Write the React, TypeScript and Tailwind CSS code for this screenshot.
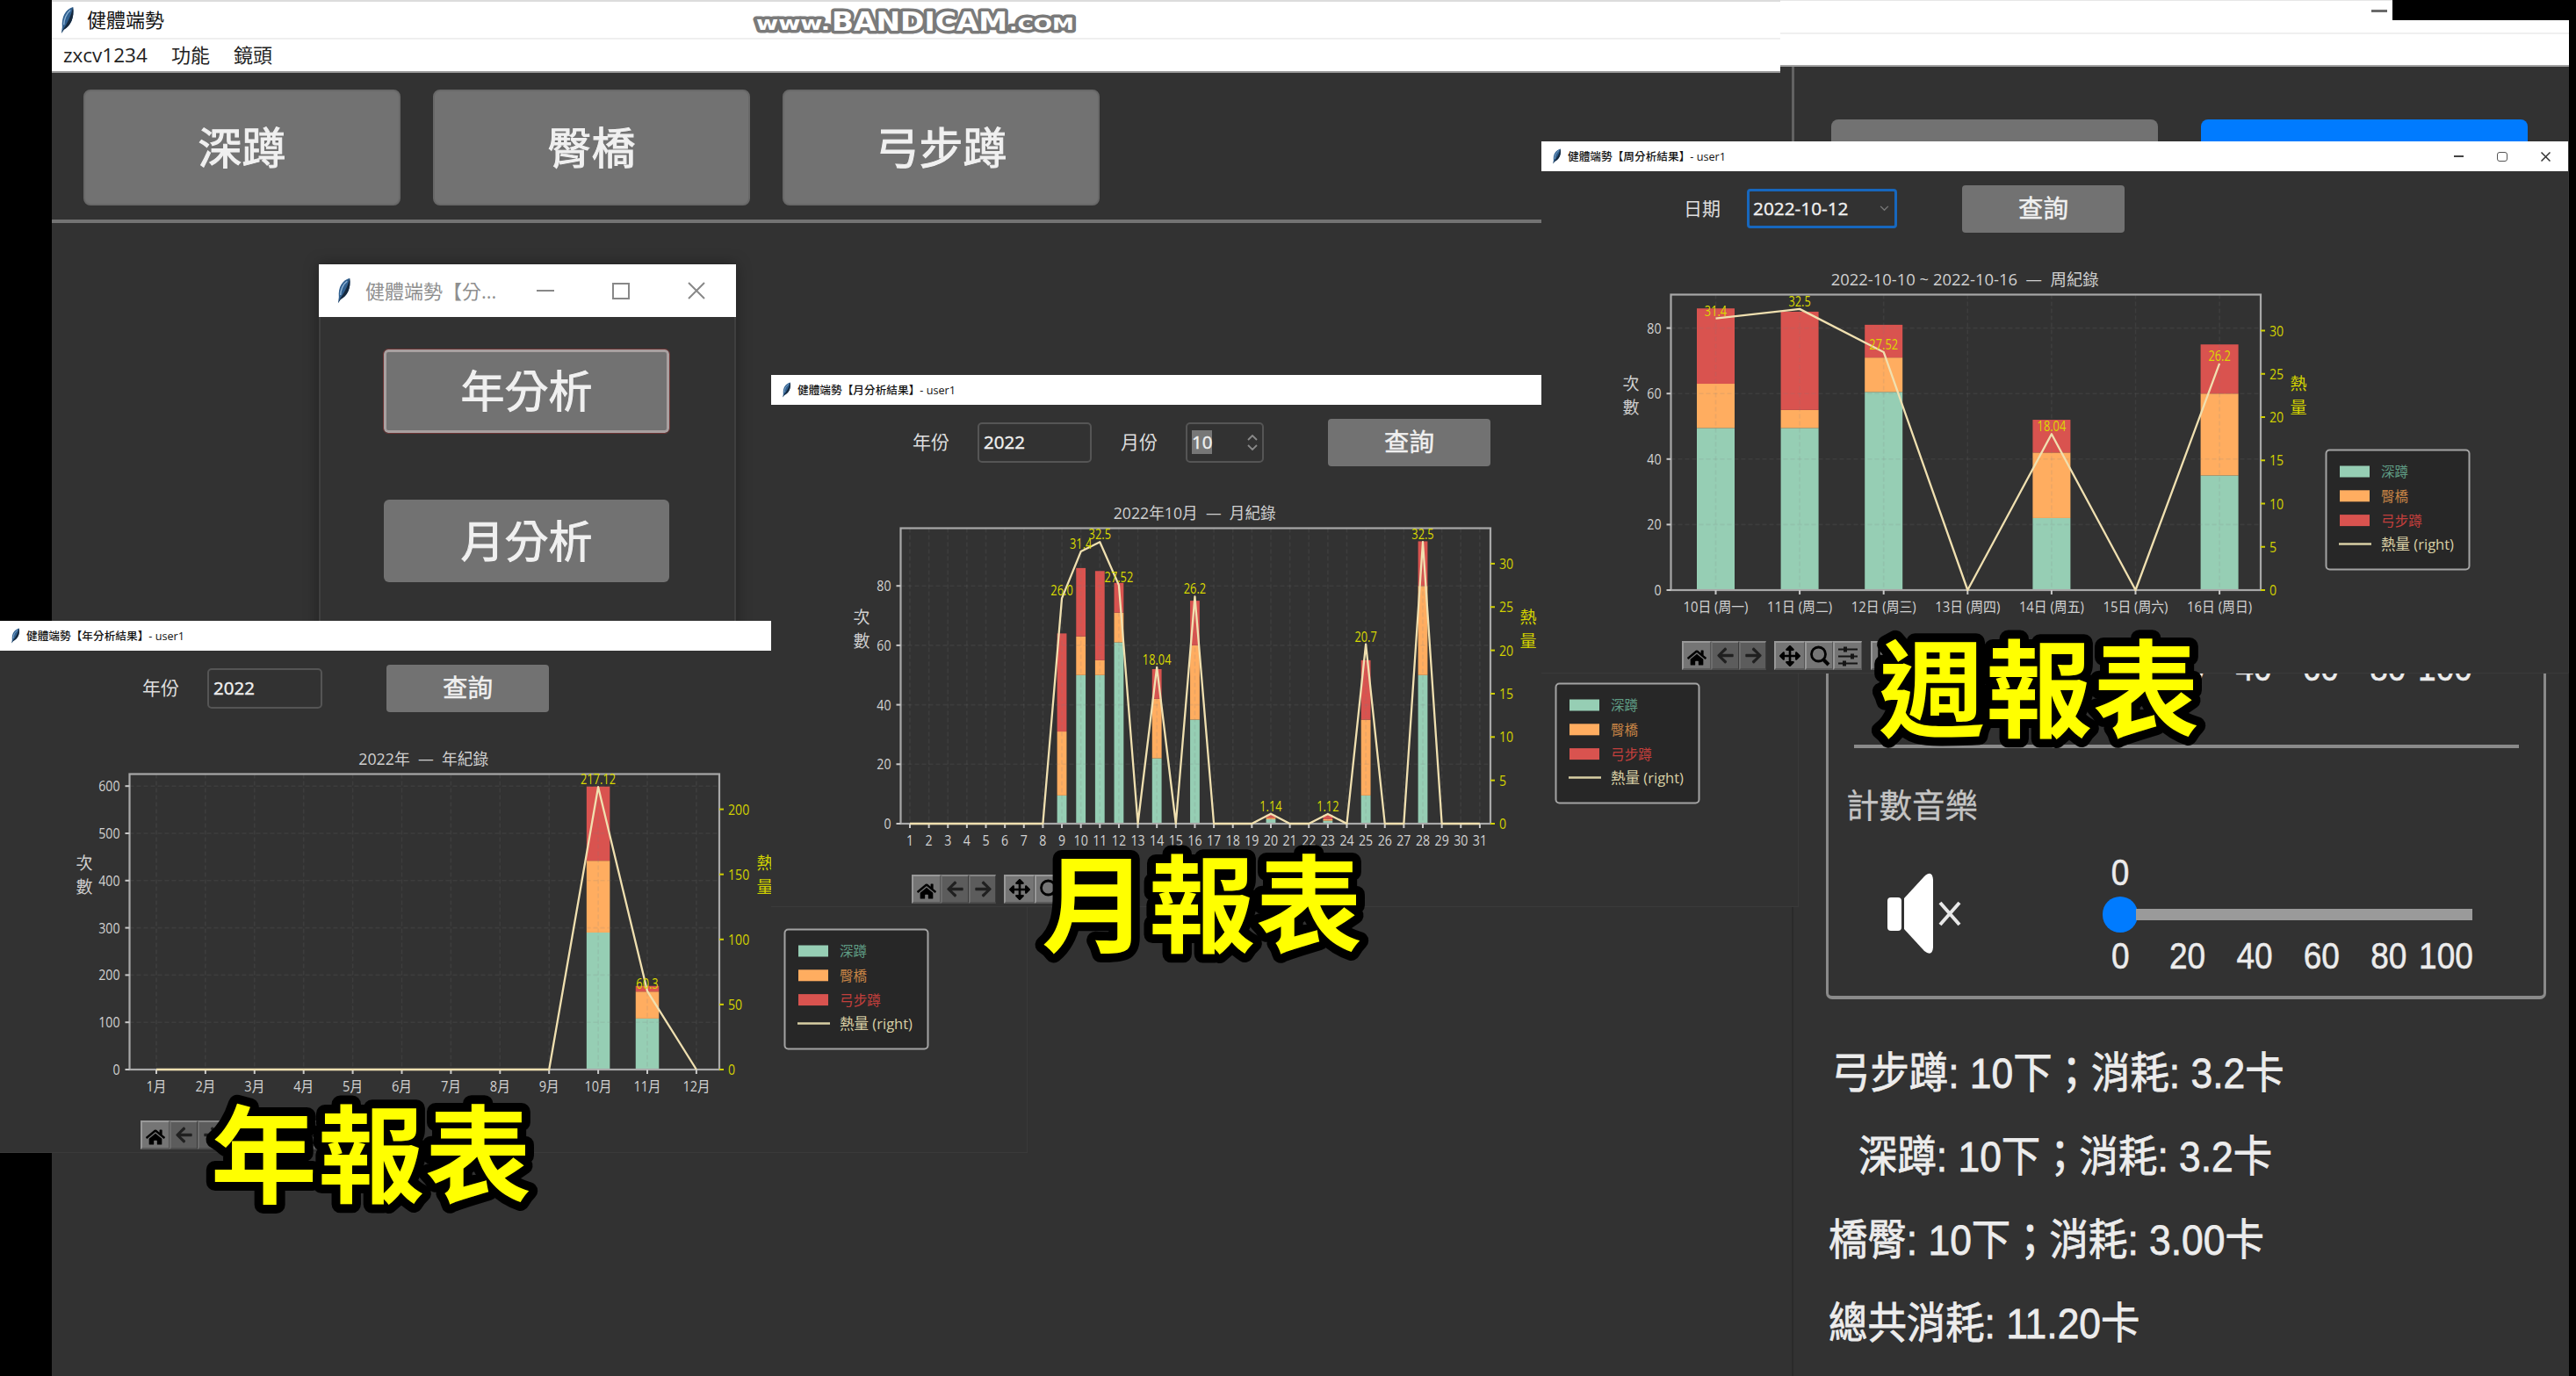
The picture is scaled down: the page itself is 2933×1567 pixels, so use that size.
import React from "react";
import { FaHome, FaArrowLeft, FaArrowRight, FaArrowsAlt, FaSave } from "react-icons/fa";

const UI = "'Open Sans','Noto Sans CJK TC',sans-serif";

type Series = { i: number; g: number; o: number; r: number };
type ChartProps = {
  title: string;
  titleWidth: number;
  x0: number;
  step: number;
  labels: string[];
  labelWidth: (s: string) => number;
  leftLabelX: number;
  rightLabelX: number;
  barW: number;
  yTicks: number[];
  yScale: number;
  rTicks: number[];
  rScale: number;
  bars: Series[];
  values: number[];
  notes: { i: number; t: string }[];
};

const L = 147.5;
const R = 819;
const T = 174.5;
const B = 511;

function Feather({ className }: { className: string }) {
  return (
    <svg viewBox="0 0 18 36" preserveAspectRatio="none" className={className}>
      <path d="M16 1 C7 4 2 13 3 27 L2 35 L5 30 C13 26 18 14 16 1Z" fill="#2f5f8f" />
      <path d="M16 1 C14 12 9 22 4 30 L2 35 L5 30 C13 26 18 14 16 1Z" fill="#16283c" />
      <path d="M13 5 C8 9 5 17 5 24" stroke="#8fb4d6" strokeWidth="1.5" fill="none" />
    </svg>
  );
}

function Legend() {
  const rows = [
    { c: "#96ceb4", t: "深蹲", w: 31, text: "#5f9c84" },
    { c: "#ffad60", t: "臀橋", w: 31, text: "#c98546" },
    { c: "#d9534f", t: "弓步蹲", w: 47, text: "#c23f3c" },
  ];
  return (
    <g>
      <rect x={893.5} y={351.5} width={163} height={136} rx={4} fill="#272727" stroke="#a3a3a3" strokeWidth={2} />
      {rows.map((r, i) => (
        <g key={r.t}>
          <rect x={909} y={369.5 + i * 27.8} width={34} height={13} fill={r.c} />
          <text x={956} y={382 + i * 27.8} fontSize={16} fill={r.text} textLength={r.w} lengthAdjust="spacingAndGlyphs">{r.t}</text>
        </g>
      ))}
      <line x1={908} x2={945} y1={458.5} y2={458.5} stroke="#d8cfa4" strokeWidth={2.5} />
      <text x={956} y={465} fontSize={17} fill="#d8cfa4" textLength={83} lengthAdjust="spacingAndGlyphs">熱量 (right)</text>
    </g>
  );
}

function digitsWidth(v: number) {
  return String(v).length * 8.1;
}

function noteWidth(t: string) {
  return (t.length - 1) * 7.3 + 3.5;
}

function Chart(p: ChartProps) {
  const x = (i: number) => p.x0 + i * p.step;
  const y = (v: number) => B - v * p.yScale;
  const ry = (v: number) => B - v * p.rScale;
  return (
    <svg viewBox="0 119 1170 446" className="block h-[446px] w-[1170px] shrink-0" fontFamily={UI}>
      <text x={(L + R) / 2 - 1} y={163.5} fontSize={18} fill="#d0d0d0" textAnchor="middle" textLength={p.titleWidth} lengthAdjust="spacingAndGlyphs">{p.title}</text>
      {p.bars.map((b) => (
        <g key={b.i}>
          <rect x={x(b.i) - p.barW / 2} width={p.barW} y={y(b.g)} height={b.g * p.yScale} fill="#96ceb4" />
          <rect x={x(b.i) - p.barW / 2} width={p.barW} y={y(b.g + b.o)} height={b.o * p.yScale} fill="#ffad60" />
          <rect x={x(b.i) - p.barW / 2} width={p.barW} y={y(b.g + b.o + b.r)} height={b.r * p.yScale} fill="#d9534f" />
        </g>
      ))}
      <g stroke="#808080" strokeOpacity={0.15} strokeWidth={1.6} strokeDasharray="5 3">
        {p.labels.map((l, i) => <line key={l} x1={x(i)} x2={x(i)} y1={T} y2={B} />)}
        {p.yTicks.map((v) => <line key={v} x1={L} x2={R} y1={y(v)} y2={y(v)} />)}
      </g>
      <rect x={L} y={T} width={R - L} height={B - T} fill="none" stroke="#a8a8a8" strokeWidth={2.2} />
      {p.labels.map((l, i) => (
        <g key={l}>
          <line x1={x(i)} x2={x(i)} y1={B} y2={B + 5} stroke="#c8c8c8" strokeWidth={2} />
          <text x={x(i)} y={535.5} fontSize={16} fill="#d2d2d2" textAnchor="middle" textLength={p.labelWidth(l)} lengthAdjust="spacingAndGlyphs">{l}</text>
        </g>
      ))}
      {p.yTicks.map((v) => (
        <g key={v}>
          <line x1={L - 5} x2={L} y1={y(v)} y2={y(v)} stroke="#c8c8c8" strokeWidth={2} />
          <text x={L - 11} y={y(v) + 6} fontSize={16} fill="#d2d2d2" textAnchor="end" textLength={digitsWidth(v)} lengthAdjust="spacingAndGlyphs">{v}</text>
        </g>
      ))}
      {p.rTicks.map((v) => (
        <g key={v}>
          <line x1={R} x2={R + 5} y1={ry(v)} y2={ry(v)} stroke="#cfcf00" strokeWidth={2} />
          <text x={R + 10} y={ry(v) + 6} fontSize={16} fill="#d2d200" textLength={digitsWidth(v)} lengthAdjust="spacingAndGlyphs">{v}</text>
        </g>
      ))}
      <g fontSize={19} textAnchor="middle">
        <text x={p.leftLabelX} y={283} fill="#d0d0d0">次</text>
        <text x={p.leftLabelX} y={310} fill="#d0d0d0">數</text>
        <text x={p.rightLabelX} y={283} fill="#d2d200">熱</text>
        <text x={p.rightLabelX} y={310} fill="#d2d200">量</text>
      </g>
      <polyline points={p.values.map((v, i) => `${x(i)},${ry(v)}`).join(" ")} fill="none" stroke="#f0e0b0" strokeWidth={2.3} strokeLinejoin="round" />
      {p.notes.map((n) => (
        <text key={n.i} x={x(n.i)} y={ry(p.values[n.i]) - 3} fontSize={15.5} fill="#dada00" textAnchor="middle" textLength={noteWidth(n.t)} lengthAdjust="spacingAndGlyphs">{n.t}</text>
      ))}
      <Legend />
    </svg>
  );
}

function ToolButton({ dim, className, children }: { dim?: boolean; className: string; children?: React.ReactNode }) {
  return (
    <div
      className={`flex h-[33px] items-center justify-center border-t-2 border-l-2 border-r border-b-2 ${
        dim ? "border-t-[#858585] border-l-[#6c6c6c] border-r-[#3c3c3c] border-b-[#4c4c4c] bg-[#5c5c5c] text-[#202020]" : "border-t-[#989898] border-l-[#989898] border-r-[#555555] border-b-[#5a5a5a] bg-[#757575] text-black"
      } ${className}`}
    >
      {children}
    </div>
  );
}

function Toolbar() {
  return (
    <div className="mt-[4px] ml-[160px] flex shrink-0">
      <ToolButton className="w-[33px]"><FaHome size={22} className="mt-1" /></ToolButton>
      <ToolButton dim className="w-[32px]"><FaArrowLeft size={21} /></ToolButton>
      <ToolButton dim className="w-[31px]"><FaArrowRight size={21} /></ToolButton>
      <ToolButton className="ml-[9px] w-[35px]"><FaArrowsAlt size={24} /></ToolButton>
      <ToolButton className="w-[32px]">
        <svg viewBox="0 0 24 24" width={24} height={24} fill="none" stroke="black">
          <circle cx="10.5" cy="10" r="8" strokeWidth="2.8" />
          <path d="M16 16 L22 22" strokeWidth="4" />
        </svg>
      </ToolButton>
      <ToolButton className="w-[33px]">
        <svg viewBox="0 0 24 24" width={24} height={24} fill="none" stroke="#151515" strokeWidth="2.2">
          <path d="M1 4.5H23M1 12.5H23M1 20.5H23" />
          <path d="M9 1.5V7.5M17 9.5V15.5M8 17.5V23.5" strokeWidth="4" />
        </svg>
      </ToolButton>
      <ToolButton className="ml-[10px] w-[32px]"><FaSave size={20} /></ToolButton>
    </div>
  );
}

function QueryButton({ className }: { className: string }) {
  return <div className={`flex h-[54px] w-[185px] items-center justify-center rounded-[4px] bg-[#727272] text-[28.5px] text-[#f0f0f0] [-webkit-text-stroke:0.5px] ${className}`}>查詢</div>;
}

function FieldLabel({ className, children }: { className: string; children: React.ReactNode }) {
  return <div className={`shrink-0 text-[21px] text-[#dedede] ${className}`}>{children}</div>;
}

function ReportWindow({ name, className, controls, form, chart }: { name: string; className: string; controls?: boolean; form: React.ReactNode; chart: React.ReactNode }) {
  return (
    <div className={`absolute flex h-[606px] w-[1170px] flex-col overflow-hidden border-r border-b border-[#3a3a3a] bg-[#323232] ${className}`}>
      <div className="flex h-[34px] shrink-0 items-center bg-white pl-[12px]">
        <Feather className="h-[18px] w-[11px]" />
        <svg viewBox="0 0 181 24" className="ml-[7px] h-[24px] w-[181px]" fontFamily={UI} fontSize="12.5" fontWeight="500">
          <text x="0" y="16.5" fill="#111" textLength="180" lengthAdjust="spacingAndGlyphs">{name}</text>
        </svg>
        {controls && (
          <div className="mr-[20px] ml-auto flex items-center gap-[38px]">
            <div className="h-[2px] w-[11px] bg-[#444]" />
            <div className="h-[11px] w-[12px] rounded-[3px] border-[1.5px] border-[#555]" />
            <svg viewBox="0 0 11 11" width={11} height={11} stroke="#333" strokeWidth="1.5"><path d="M0.5 0.5L10.5 10.5M10.5 0.5L0.5 10.5" /></svg>
          </div>
        )}
      </div>
      <div className="flex h-[85px] shrink-0 items-center">{form}</div>
      {chart}
      <Toolbar />
    </div>
  );
}

function Caption({ text, className }: { text: string; className: string }) {
  return (
    <svg viewBox="0 0 400 160" className={`absolute h-[160px] w-[400px] ${className}`} fontFamily="'Noto Sans CJK TC',sans-serif" fontWeight="700">
      <text x="18" y="124" fontSize="121" fill="#ffff00" stroke="black" strokeWidth="20" strokeLinejoin="round" paintOrder="stroke" textLength="365">{text}</text>
    </svg>
  );
}

function TopButton({ children }: { children: React.ReactNode }) {
  return <div className="flex h-[132px] w-[361px] items-center justify-center rounded-[8px] border-2 border-[#686868] bg-[#727272] text-[50px] text-[#f0f0f0] [-webkit-text-stroke:1px]">{children}</div>;
}

function MainWindow() {
  return (
    <div className="absolute top-0 left-[59px] flex h-[1567px] w-[1981px] flex-col">
      <div className="flex h-[45px] w-[1968px] items-center border-t-2 border-b-2 border-t-[#dcdcdc] border-b-[#efefef] bg-white pl-[9px] text-[22px] text-[#111]">
        <Feather className="h-[32px] w-[17px]" />
        <span className="ml-[14px]">健體端勢</span>
      </div>
      <div className="flex h-[38px] w-[1968px] items-center gap-[27px] border-b-2 border-[#9a9a9a] bg-white pb-[1px] pl-[13px] text-[22px] text-[#222]">
        <span className="w-[96px] text-[22.5px]">zxcv1234</span>
        <span>功能</span>
        <span>鏡頭</span>
      </div>
      <div className="flex gap-[37px] border-b-4 border-[#737373] px-[36px] pt-[19px] pb-[16px]">
        <TopButton>深蹲</TopButton>
        <TopButton>臀橋</TopButton>
        <TopButton>弓步蹲</TopButton>
      </div>
    </div>
  );
}

function Dialog() {
  return (
    <div className="absolute top-[301px] left-[363px] flex h-[500px] w-[475px] flex-col border-x-2 border-[#3f3f3f] bg-[#323232] shadow-[0_0_16px_rgba(0,0,0,0.35)]">
      <div className="-mx-[2px] flex h-[60px] items-center bg-white pr-[35px] pl-[20px] text-[22px] text-[#8f8f8f]">
        <Feather className="h-[30px] w-[17px]" />
        <span className="ml-[16px] whitespace-nowrap">健體端勢【分...</span>
        <div className="ml-auto flex items-center gap-[66px]">
          <div className="h-[2px] w-[20px] bg-[#888]" />
          <div className="h-[19px] w-[20px] border-2 border-[#888]" />
          <svg viewBox="0 0 20 20" width={20} height={20} stroke="#888" strokeWidth="2"><path d="M1 1L19 19M19 1L1 19" /></svg>
        </div>
      </div>
      <div className="mt-[37px] ml-[72px] flex h-[95px] w-[325px] items-center justify-center rounded-[5px] border-[3px] border-[#a8a0a0] bg-[#727272] text-[50px] text-[#f0f0f0] outline-1 outline-[#6d3434] [-webkit-text-stroke:1px]">年分析</div>
      <div className="mt-[76px] ml-[72px] flex h-[94px] w-[325px] items-center justify-center rounded-[6px] bg-[#727272] text-[50px] text-[#f0f0f0] [-webkit-text-stroke:1px]">月分析</div>
    </div>
  );
}

function Scale() {
  const marks = ["0", "20", "40", "60", "80"];
  return (
    <div className="flex font-['Liberation_Sans'] text-[37px] leading-[42px] text-[#ececec]">
      {marks.map((m) => (
        <span key={m} className="w-[76.4px] scale-y-[1.14] text-center [-webkit-text-stroke:0.5px]">{m}</span>
      ))}
      <span className="-ml-[5px] w-[64px] scale-y-[1.14] text-center [-webkit-text-stroke:0.5px]">100</span>
    </div>
  );
}

function Stat({ className, children }: { className: string; children: React.ReactNode }) {
  return <div className={`flex h-[95px] origin-left scale-y-[1.1] items-center whitespace-nowrap text-[44.4px] text-[#ececec] [-webkit-text-stroke:0.7px] ${className}`}>{children}</div>;
}

function SidePanel() {
  return (
    <div className="absolute top-0 left-[2040px] h-[1567px] w-[885px] bg-[#323232]">
      <div className="-ml-[13px] flex h-[76px] flex-col border-t border-b-2 border-t-[#e6e6e6] border-b-[#a0a0a0] bg-white">
        <div className="flex h-[38px] items-start border-b-2 border-[#f0f0f0] pt-[10px] pl-[673px]">
          <div className="h-[3px] w-[18px] bg-[#6a6a6a]" />
        </div>
      </div>
      <div className="flex h-[690px] gap-[49px] border-l-[3px] border-[#626262] pt-[60px] pl-[42px]">
        <div className="h-[100px] w-[372px] rounded-[8px] bg-[#727272]" />
        <div className="h-[100px] w-[372px] rounded-[8px] bg-[#007bff]" />
      </div>
      <div className="flex h-[801px] flex-col border-l-2 border-[#2a2a2a]">
        <div className="ml-[37px] flex h-[372px] w-[820px] shrink-0 flex-col rounded-b-[7px] border-x-[3px] border-b-4 border-[#8a8a8a]">
          <div className="mr-[28px] ml-[29px] flex h-[86px] flex-col border-b-4 border-[#8a8a8a]">
            <div className="-mt-[26px] ml-[264px]"><Scale /></div>
          </div>
          <div className="mt-[38px] ml-[20px] text-[37.5px] leading-[54px] text-[#c4c4c4] [-webkit-text-stroke:0.3px]">計數音樂</div>
          <div className="mt-[28px] flex">
            <svg viewBox="0 0 90 96" width={90} height={96} className="mt-[20px] ml-[65px] shrink-0">
              <rect x="2" y="30" width="16" height="38" rx="4" fill="white" />
              <path d="M21 31 L44 6 Q53 -2 54 10 V87 Q53 98 44 91 L21 66Z" fill="white" />
              <path d="M62 36 L84 61 M84 36 L62 61" stroke="#e8e8e8" strokeWidth="4" />
            </svg>
            <div className="ml-[139px] flex flex-col">
              <div className="mt-[1px] w-[76px] scale-y-[1.14] text-center font-['Liberation_Sans'] text-[37px] leading-[42px] text-[#ececec] [-webkit-text-stroke:0.5px]">0</div>
              <div className="mt-[6px] ml-[18px] flex h-[41px] items-center">
                <div className="h-[41px] w-[40px] rounded-full bg-[#007bff]" />
                <div className="-ml-[2px] h-[13px] w-[383px] bg-[#9a9a9a]" />
              </div>
              <div className="mt-[6px]"><Scale /></div>
            </div>
          </div>
        </div>
        <div className="mt-[38px] flex flex-col font-['Liberation_Sans','Noto_Sans_CJK_TC',sans-serif]">
          <Stat className="ml-[43px]">弓步蹲: 10下；消耗: 3.2卡</Stat>
          <Stat className="ml-[74px]">深蹲: 10下；消耗: 3.2卡</Stat>
          <Stat className="ml-[40px]">橋臀: 10下；消耗: 3.00卡</Stat>
          <Stat className="ml-[40px]">總共消耗: 11.20卡</Stat>
        </div>
      </div>
    </div>
  );
}

const monthValues = Array.from({ length: 31 }, () => 0);
Object.entries({ 9: 26, 10: 31.4, 11: 32.5, 12: 27.52, 14: 18.04, 16: 26.2, 20: 1.14, 23: 1.12, 25: 20.7, 28: 32.5 }).forEach(([d, v]) => {
  monthValues[Number(d) - 1] = v;
});

export default function App() {
  return (
    <div className="relative h-[1567px] w-[2933px] overflow-hidden bg-black font-['Open_Sans','Noto_Sans_CJK_TC',sans-serif]">
      <div className="absolute top-0 left-[59px] h-[1567px] w-[2866px] bg-[#323232]" />
      <SidePanel />
      <MainWindow />
      <svg viewBox="0 0 380 40" className="absolute top-[4px] left-[854px] h-[40px] w-[380px]" fontFamily="'DejaVu Sans',sans-serif" fontWeight="700" fill="white" stroke="#7a7a7a" strokeWidth="7" strokeLinejoin="round" paintOrder="stroke">
        <text x="7" y="30" fontSize="21" textLength="84" lengthAdjust="spacingAndGlyphs">www.</text>
        <text x="295" y="30" fontSize="20" textLength="74" lengthAdjust="spacingAndGlyphs">.COM</text>
        <text x="93" y="30.5" fontSize="30" textLength="200" lengthAdjust="spacingAndGlyphs">BANDICAM</text>
      </svg>
      <div className="absolute top-0 left-[2724px] h-[23px] w-[209px] bg-black" />
      <Dialog />
      <ReportWindow
        name="健體端勢【年分析結果】- user1"
        className="top-[707px] left-0"
        form={
          <>
            <FieldLabel className="ml-[162px] w-[74px]">年份</FieldLabel>
            <div className="flex h-[46px] w-[131px] items-center rounded-[5px] border-2 border-[#555] pl-[5px] text-[20.5px] text-[#f0f0f0] [-webkit-text-stroke:0.4px]">2022</div>
            <QueryButton className="ml-[73px]" />
          </>
        }
        chart={
          <Chart
            title={"2022年\u00a0 — \u00a0年紀錄"} titleWidth={148} x0={178} step={55.9}
            labels={Array.from({ length: 12 }, (_, i) => `${i + 1}月`)}
            labelWidth={(s) => (s.length > 2 ? 31 : 23)}
            leftLabelX={96} rightLabelX={871}
            barW={26.5} yTicks={[0, 100, 200, 300, 400, 500, 600]} yScale={0.538} rTicks={[0, 50, 100, 150, 200]} rScale={1.482}
            bars={[{ i: 9, g: 290, o: 152, r: 157 }, { i: 10, g: 108, o: 57, r: 12 }]}
            values={[0, 0, 0, 0, 0, 0, 0, 0, 0, 217.12, 60.3, 0]}
            notes={[{ i: 9, t: "217.12" }, { i: 10, t: "60.3" }]}
          />
        }
      />
      <ReportWindow
        name="健體端勢【月分析結果】- user1"
        className="top-[427px] left-[878px]"
        form={
          <>
            <FieldLabel className="ml-[161px] w-[74px]">年份</FieldLabel>
            <div className="flex h-[46px] w-[130px] items-center rounded-[5px] border-2 border-[#555] pl-[5px] text-[20.5px] text-[#f0f0f0] [-webkit-text-stroke:0.4px]">2022</div>
            <FieldLabel className="ml-[33px] w-[74px]">月份</FieldLabel>
            <div className="flex h-[46px] w-[89px] items-center justify-between rounded-[5px] border-2 border-[#555] pr-[5px] pl-[5px] text-[20.5px] text-[#f0f0f0] [-webkit-text-stroke:0.4px]">
              <span className="bg-[#777] leading-[27px]">10</span>
              <svg viewBox="0 0 12 18" width={12} height={18} fill="none" stroke="#8a8a8a" strokeWidth="1.8"><path d="M1 6L6 1L11 6M1 12L6 17L11 12" /></svg>
            </div>
            <QueryButton className="ml-[73px]" />
          </>
        }
        chart={
          <Chart
            title={"2022年10月\u00a0 — \u00a0月紀錄"} titleWidth={185} x0={158} step={21.63}
            labels={Array.from({ length: 31 }, (_, i) => `${i + 1}`)}
            labelWidth={(s) => s.length * 8.1}
            leftLabelX={103} rightLabelX={862}
            barW={10.8} yTicks={[0, 20, 40, 60, 80]} yScale={3.385} rTicks={[0, 5, 10, 15, 20, 25, 30]} rScale={9.87}
            bars={[
              { i: 8, g: 9.5, o: 21.5, r: 33 }, { i: 9, g: 50, o: 13, r: 23 }, { i: 10, g: 50, o: 5, r: 30 },
              { i: 11, g: 61, o: 10, r: 10 }, { i: 13, g: 22, o: 20, r: 10 }, { i: 15, g: 35, o: 25, r: 15 },
              { i: 19, g: 1.5, o: 0.5, r: 1 }, { i: 22, g: 1, o: 0.5, r: 1.5 }, { i: 24, g: 9.5, o: 25.5, r: 20 },
              { i: 27, g: 50, o: 30, r: 15 },
            ]}
            values={monthValues}
            notes={[
              { i: 8, t: "26.0" }, { i: 9, t: "31.4" }, { i: 10, t: "32.5" }, { i: 11, t: "27.52" }, { i: 13, t: "18.04" },
              { i: 15, t: "26.2" }, { i: 19, t: "1.14" }, { i: 22, t: "1.12" }, { i: 24, t: "20.7" }, { i: 27, t: "32.5" },
            ]}
          />
        }
      />
      <ReportWindow
        name="健體端勢【周分析結果】- user1"
        controls
        className="top-[161px] left-[1755px]"
        form={
          <>
            <FieldLabel className="ml-[162px] w-[72px]">日期</FieldLabel>
            <div className="flex h-[45px] w-[171px] items-center justify-between rounded-[4px] border-[3px] border-[#1767bd] pr-[6px] pl-[4px] text-[20.8px] text-[#f0f0f0] [-webkit-text-stroke:0.4px]">
              2022-10-12
              <svg viewBox="0 0 12 8" width={11} height={7} fill="none" stroke="#777" strokeWidth="1.6"><path d="M1 1L6 6L11 1" /></svg>
            </div>
            <QueryButton className="ml-[74px]" />
          </>
        }
        chart={
          <Chart
            title={"2022-10-10 ~ 2022-10-16\u00a0 — \u00a0周紀錄"} titleWidth={305} x0={198.5} step={95.6}
            labels={["10日 (周一)", "11日 (周二)", "12日 (周三)", "13日 (周四)", "14日 (周五)", "15日 (周六)", "16日 (周日)"]}
            labelWidth={() => 74}
            leftLabelX={102} rightLabelX={862}
            barW={43} yTicks={[0, 20, 40, 60, 80]} yScale={3.73} rTicks={[0, 5, 10, 15, 20, 25, 30]} rScale={9.85}
            bars={[
              { i: 0, g: 49.5, o: 13.5, r: 23 }, { i: 1, g: 49.5, o: 5.5, r: 30 }, { i: 2, g: 60.5, o: 10.5, r: 10 },
              { i: 4, g: 22, o: 20, r: 10 }, { i: 6, g: 35, o: 25, r: 15 },
            ]}
            values={[31.4, 32.5, 27.52, 0, 18.04, 0, 26.2]}
            notes={[{ i: 0, t: "31.4" }, { i: 1, t: "32.5" }, { i: 2, t: "27.52" }, { i: 4, t: "18.04" }, { i: 6, t: "26.2" }]}
          />
        }
      />
      <Caption text="年報表" className="top-[1236px] left-[222px]" />
      <Caption text="月報表" className="top-[951px] left-[1168px]" />
      <Caption text="週報表" className="top-[706px] left-[2121px]" />
    </div>
  );
}
